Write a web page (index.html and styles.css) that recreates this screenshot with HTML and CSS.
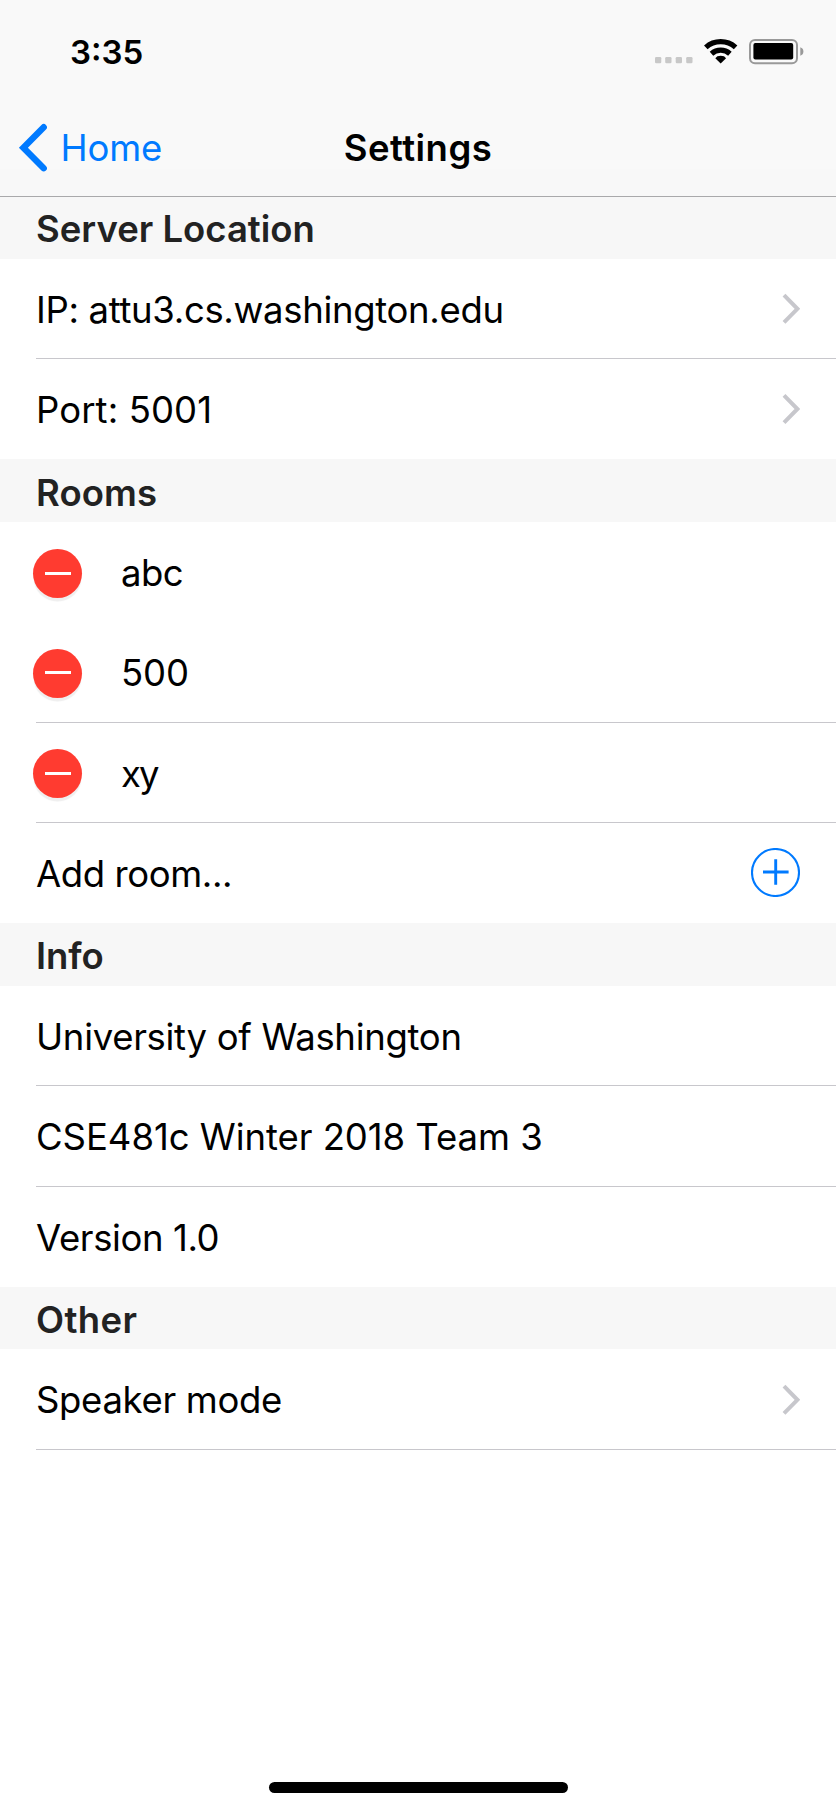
FILE: index.html
```html
<!DOCTYPE html>
<html lang="en">
<head>
<meta charset="utf-8">
<title>Settings</title>
<link rel="stylesheet" href="styles.css">
</head>
<body>
<div class="screen">
  <header class="top">
    <div class="status">
      <span class="clock">3:35</span>
      <svg class="status-icons" viewBox="650 30 160 40" width="160" height="40">
        <g fill="#c8c8c8">
          <rect x="655" y="57" width="6.3" height="6.3" rx="1.2"/>
          <rect x="665.2" y="57" width="6.3" height="6.3" rx="1.2"/>
          <rect x="675.7" y="57" width="6.3" height="6.3" rx="1.2"/>
          <rect x="686.2" y="57" width="6.3" height="6.3" rx="1.2"/>
        </g>
        <g fill="none" stroke="#000" stroke-width="5.3">
          <path d="M705.8 47.4A22.3 22.3 0 0 1 735.6 47.4"/>
          <path d="M711.5 53.7A13.9 13.9 0 0 1 729.9 53.7"/>
        </g>
        <path d="M720.7 63.6L715.3 58.2Q716.8 55.8 720.7 55.8T726.1 58.2Z"/>
        <rect x="750" y="40" width="47" height="23.3" rx="5" fill="none" stroke="#999" stroke-width="2"/>
        <rect x="753.4" y="43" width="39.8" height="16.6" rx="2"/>
        <path d="M800.3 47.3Q803.4 48.3 803.4 51.5T800.3 55.7Z" fill="#999"/>
      </svg>
    </div>
    <nav class="nav">
      <a class="back">
        <svg viewBox="18 120 30 56" width="30" height="56"><path d="M43.7 127.2L23.4 147.7L43.7 168.2" fill="none" stroke="#007aff" stroke-width="6.4" stroke-linecap="round"/></svg>
        <span class="home">Home</span>
      </a>
      <h1 class="title">Settings</h1>
    </nav>
  </header>

  <h2 class="head first">Server Location</h2>
  <div class="row line"><span class="t-ip">IP: attu3.cs.washington.edu</span><svg class="chev" viewBox="0 0 20 34" width="20" height="34"><path d="M4 3.2L17.4 16.8L4 30.4" fill="none" stroke="#c7c7cc" stroke-width="4"/></svg></div>
  <div class="row"><span class="t-port">Port: 5001</span><svg class="chev" viewBox="0 0 20 34" width="20" height="34"><path d="M4 3.4L17.4 17L4 30.6" fill="none" stroke="#c7c7cc" stroke-width="4"/></svg></div>

  <h2 class="head rooms">Rooms</h2>
  <div class="row room"><i class="minus"></i><span class="t-abc">abc</span></div>
  <div class="row room tall line"><i class="minus up"></i><span class="t-500">500</span></div>
  <div class="row room line"><i class="minus up"></i><span class="t-xy">xy</span></div>
  <div class="row"><span class="t-add">Add room...</span><svg class="plus" viewBox="0 0 49 49" width="49" height="49"><g fill="none" stroke="#007aff"><circle cx="24.5" cy="24.5" r="23.5" stroke-width="2.1"/><path d="M12 24H37.6M24.7 11.3V36.7" stroke-width="2.9"/></g></svg></div>

  <h2 class="head info">Info</h2>
  <div class="row line"><span class="t-uni">University of Washington</span></div>
  <div class="row tall line"><span class="t-cse">CSE481c Winter 2018 Team 3</span></div>
  <div class="row"><span class="t-ver">Version 1.0</span></div>

  <h2 class="head other">Other</h2>
  <div class="row tall line"><span class="t-spk">Speaker mode</span><svg class="chev" viewBox="0 0 20 34" width="20" height="34"><path d="M4 3.2L17.4 16.8L4 30.4" fill="none" stroke="#c7c7cc" stroke-width="4"/></svg></div>
  <div class="indicator"></div>
</div>
</body>
</html>
```
FILE: styles.css
```css
* { box-sizing: border-box; margin: 0; }
body { background: #fff; }
.screen {
  width: 836px; height: 1811px;
  display: flex; flex-direction: column;
  font: 400 36.5px/44px Inter, "Liberation Sans", sans-serif;
  color: #000; background: #fff; overflow: hidden;
}
.screen > * { flex-shrink: 0; }

/* status bar and navigation */
.top {
  height: 197px; border-bottom: 1px solid #a9a9ab;
  background: linear-gradient(#f9f9f9 169px, #f8f8f8 169px);
}
.status {
  height: 98px; padding: 30px 26px 0 70px;
  display: flex; justify-content: space-between; align-items: flex-start;
}
.clock { font-size: 33px; line-height: 40px; font-weight: 600; letter-spacing: 0; padding-top: 2px; }
.nav { height: 98px; display: grid; grid-template-columns: 1fr auto 1fr; align-items: start; }
.back { display: flex; align-items: flex-start; padding: 22px 0 0 18px; color: #007aff; }
.home { margin: 6px 0 0 12.5px; letter-spacing: -.16px; }
.title { font-size: 36.5px; line-height: 44px; font-weight: 600; letter-spacing: .476px; padding-top: 28px; }

/* section headings */
.head {
  height: 63px; padding: 4px 0 0 36px;
  display: flex; align-items: center;
  font-size: 36.5px; line-height: 44px; font-weight: 600;
  color: #222; background: #f7f7f7;
}
.first { height: 62px; padding-top: 2px; }
.rooms { letter-spacing: .085px; }
.info { padding-top: 3px; letter-spacing: -.08px; }
.other { height: 62px; letter-spacing: .39px; }

/* list rows */
.row {
  height: 100px; padding: 0 36px;
  display: flex; align-items: center; justify-content: space-between;
}
.row > span { padding-top: 1px; }
.tall { height: 101px; }
.line {
  background: linear-gradient(#c8c7cc, #c8c7cc) 36px 100% / 100% 1px no-repeat;
}
.room { justify-content: flex-start; gap: 39px; padding-left: 33px; }
.minus {
  width: 49px; height: 49px; border-radius: 50%; margin-top: 3px;
  display: flex; align-items: center; justify-content: center;
  background: #ff3b30; box-shadow: 0 4px 1px -.5px #efefef;
}
.minus::after { content: ""; width: 26px; height: 3px; margin-bottom: 1px; background: #fff; }
.up { margin-top: 1px; }
.plus { margin-top: -1px; }
.t-ip { letter-spacing: -.33px; }
.t-port { letter-spacing: .1px; }
.t-abc { letter-spacing: -.5px; }
.t-500 { letter-spacing: -.1px; }
.t-xy { letter-spacing: -2px; }
.t-add { letter-spacing: -.406px; }
.t-uni { letter-spacing: -.3px; }
.t-cse { letter-spacing: -.05px; }
.t-ver { letter-spacing: -.4px; }
.t-spk { letter-spacing: -.328px; }

.indicator {
  width: 299px; height: 11px; border-radius: 5.5px;
  margin: auto 0 18px 269px; background: #000;
}
```
